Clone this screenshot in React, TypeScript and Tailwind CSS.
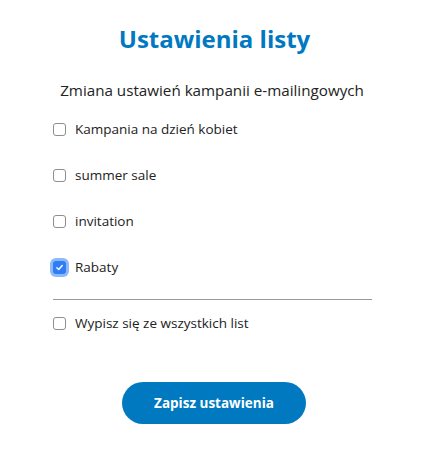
import { useState } from "react";

const lists = [
  { name: "Kampania na dzień kobiet", checked: false },
  { name: "summer sale", checked: false },
  { name: "invitation", checked: false },
  { name: "Rabaty", checked: true },
];

const Box = ({ checked }: { checked: boolean }) =>
  checked ? (
    <span className="flex h-[13px] w-[13px] items-center justify-center rounded-[3px] bg-[#2f7df6] ring-[3px] ring-[#8db8fa]">
      <svg viewBox="0 0 12 12" className="h-[9px] w-[9px]">
        <path d="M2.5 6.2 L5 8.6 L9.6 3.4" fill="none" stroke="white" strokeWidth="1.9" strokeLinecap="round" strokeLinejoin="round" />
      </svg>
    </span>
  ) : (
    <span className="block h-[13px] w-[13px] rounded-[3px] border border-[#8e8e8e] bg-white" />
  );

const App = () => {
  const [items, setItems] = useState(lists);
  const [all, setAll] = useState(false);

  return (
    <div className="flex min-h-[459px] flex-col items-center bg-white pt-[23px] font-['Open_Sans',sans-serif] text-[#222]">
      <h1 className="ml-[5px] text-[24px] font-bold leading-[32px] text-[#0079c1]">Ustawienia listy</h1>
      <p className="mt-[24px] text-[15.2px] leading-[22px] text-[#222]">Zmiana ustawień kampanii e-mailingowych</p>
      <div className="mt-[5px] w-[320px] pl-[1px]">
        {items.map((item, index) => (
          <label
            key={index}
            className="flex h-[46px] cursor-pointer items-center gap-[9px]"
            onClick={() => setItems(items.map((it, i) => (i === index ? { ...it, checked: !it.checked } : it)))}
          >
            <Box checked={item.checked} />
            <span className="text-[13.5px] leading-[20px]">{item.name}</span>
          </label>
        ))}
        <div className="mt-[9px] h-px bg-[#999]" />
        <label className="flex h-[46px] cursor-pointer items-center gap-[9px]" onClick={() => setAll(!all)}>
          <Box checked={all} />
          <span className="text-[13.5px] leading-[20px]">Wypisz się ze wszystkich list</span>
        </label>
      </div>
      <button className="ml-[4px] mt-[36px] h-[42px] w-[184px] rounded-full bg-[#0079c1] text-[13.5px] font-bold text-white">
        Zapisz ustawienia
      </button>
    </div>
  );
};

export default App;
